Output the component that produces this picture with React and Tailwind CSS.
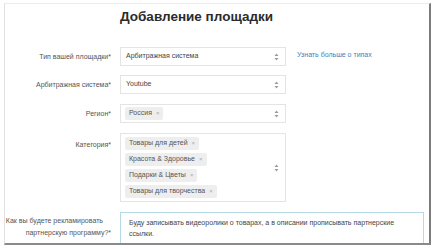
const Arrows = () => (
    <svg width="5" height="8" viewBox="0 0 5 8" className="shrink-0">
        <path d="M2.5 0.5 L4.5 3 L0.5 3 Z" fill="#9a9a9a" />
        <path d="M2.5 7.5 L4.5 5 L0.5 5 Z" fill="#9a9a9a" />
    </svg>
);

const Tag = ({ text }) => (
    <span className="inline-flex items-center h-[13px] px-[4px] bg-[#eeeeee] rounded-[2px] text-[#555] whitespace-nowrap">
        {text}
        <span className="ml-[4px] text-[#aaa] text-[6px]">×</span>
    </span>
);

const Label = ({ children, className = "" }) => (
    <div className={"text-right text-[#555] leading-[11px] whitespace-nowrap " + className}>{children}</div>
);

export default function App() {
    return (
        <div
            className="w-[434px] h-[249px] bg-white pl-[4px] pt-[3px] overflow-hidden"
            style={{ fontFamily: '"Liberation Sans", Arial, sans-serif' }}
        >
            <div className="w-[427px] h-[242px] bg-white border-t border-l border-t-[#ececec] border-l-[#e2e2e2] border-r-2 border-r-[#7c7c7c] border-b-2 border-b-[#8a8a8a] overflow-hidden text-[7px]">
                <div className="grid grid-cols-[106px_1fr] gap-x-[9px]">
                    <div />
                    <h1 className="text-[13.5px] font-bold text-[#2b2b2b] pt-[4px] h-[43px] leading-[18px]">
                        Добавление площадки
                    </h1>

                    <Label className="pt-[4px]">Тип вашей площадки*</Label>
                    <div className="flex items-center h-[19px]">
                        <div className="w-[166px] h-full border border-[#e4e4e4] flex items-center justify-between pl-[5px] pr-[6px] text-[#444]">
                            <span>Арбитражная система</span>
                            <Arrows />
                        </div>
                        <a className="ml-[11px] text-[#3d7fc0] -mt-[2px]">Узнать больше о типах</a>
                    </div>

                    <Label className="pt-[4px] mt-[9px]">Арбитражная система*</Label>
                    <div className="mt-[9px] w-[166px] h-[19px] border border-[#e4e4e4] flex items-center justify-between pl-[5px] pr-[6px] text-[#444]">
                        <span>Youtube</span>
                        <Arrows />
                    </div>

                    <Label className="pt-[4px] mt-[10px]">Регион*</Label>
                    <div className="mt-[10px] w-[166px] h-[19px] border border-[#e4e4e4] flex items-center justify-between pl-[4px] pr-[6px]">
                        <Tag text="Россия" />
                        <Arrows />
                    </div>

                    <Label className="pt-[6px] mt-[10px]">Категория*</Label>
                    <div className="mt-[10px] w-[166px] h-[69px] border border-[#e4e4e4] flex items-center justify-between pl-[4px] pr-[6px]">
                        <div className="flex flex-col items-start gap-[3px]">
                            <Tag text="Товары для детей" />
                            <Tag text="Красота & Здоровье" />
                            <Tag text="Подарки & Цветы" />
                            <Tag text="Товары для творчества" />
                        </div>
                        <Arrows />
                    </div>

                    <Label className="pt-[3px] mt-[10px] leading-[12px]">
                        <div className="pr-[8px]">Как вы будете рекламировать</div>
                        <div>партнерскую программу?*</div>
                    </Label>
                    <div className="mt-[10px] w-[304px] h-[40px] border border-[#b7dbe6] pl-[8px] pr-[6px] pt-[4px] text-[#444] leading-[11px]">
                        Буду записывать видеоролики о товарах, а в описании прописывать партнерские ссылки.
                    </div>
                </div>
            </div>
        </div>
    );
}
